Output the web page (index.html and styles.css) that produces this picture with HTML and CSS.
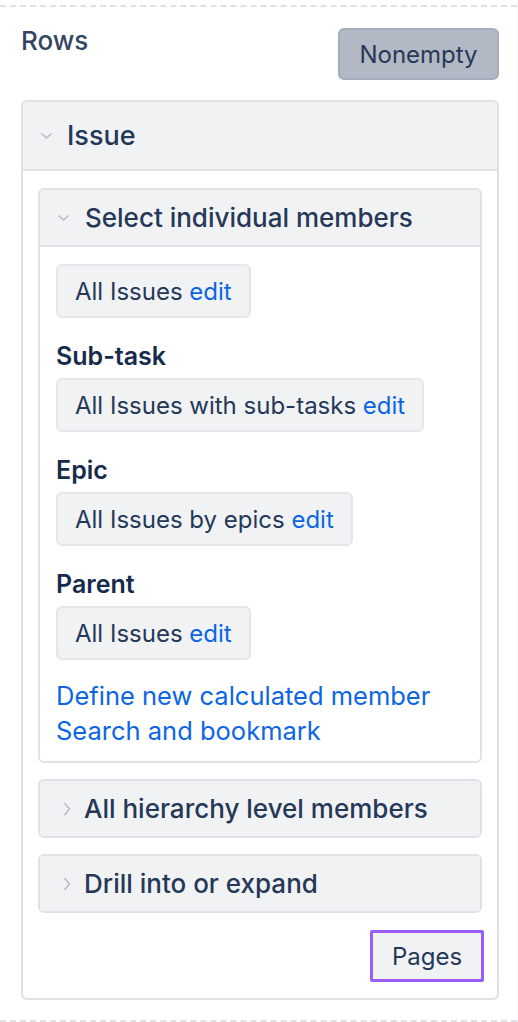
FILE: index.html
```html
<!DOCTYPE html>
<html>
<head>
<meta charset="utf-8">
<link rel="stylesheet" href="styles.css">
</head>
<body>
<div class="page">
  <div class="section">
    <div class="section-head">
      <h2 class="section-title">Rows</h2>
      <button class="btn-nonempty">Nonempty</button>
    </div>

    <div class="panel">
      <div class="panel-head">
        <svg class="chev" viewBox="0 0 12 8"><path d="M1 1.5 L6 6 L11 1.5" /></svg>
        <span class="panel-title">Issue</span>
      </div>
      <div class="panel-body">
        <div class="box">
          <div class="box-head">
            <svg class="chev" viewBox="0 0 12 8"><path d="M1 1.5 L6 6 L11 1.5" /></svg>
            <span class="box-title">Select individual members</span>
          </div>
          <div class="box-body">
            <div class="chip">All Issues <a class="link">edit</a></div>
            <div class="label">Sub-task</div>
            <div class="chip">All Issues with sub-tasks <a class="link">edit</a></div>
            <div class="label">Epic</div>
            <div class="chip">All Issues by epics <a class="link">edit</a></div>
            <div class="label">Parent</div>
            <div class="chip">All Issues <a class="link">edit</a></div>
            <div class="actions">
              <a class="link">Define new calculated member</a>
              <a class="link">Search and bookmark</a>
            </div>
          </div>
        </div>

        <div class="box collapsed">
          <div class="box-head">
            <svg class="chev-r" viewBox="0 0 8 14"><path d="M1.5 1 L6.5 7 L1.5 13" /></svg>
            <span class="box-title">All hierarchy level members</span>
          </div>
        </div>

        <div class="box collapsed">
          <div class="box-head">
            <svg class="chev-r" viewBox="0 0 8 14"><path d="M1.5 1 L6.5 7 L1.5 13" /></svg>
            <span class="box-title">Drill into or expand</span>
          </div>
        </div>

        <div class="footer">
          <button class="btn-pages">Pages</button>
        </div>
      </div>
    </div>
  </div>
</div>
</body>
</html>
```

FILE: styles.css
```css
* { box-sizing: border-box; }

html, body {
  margin: 0;
  padding: 0;
  background: #ffffff;
}

body {
  font-family: Inter, "Noto Sans", "Liberation Sans", sans-serif;
  color: #253858;
}

.page {
  padding-top: 5px;
  width: 518px;
  height: 1022px;
  border-right: 1px solid #f4f5f7;
}

.section {
  border-top: 2px dashed #dfe1e6;
  border-bottom: 2px dashed #dfe1e6;
  padding: 21px 18px 20px 21px;
}

.section-head {
  display: flex;
  justify-content: space-between;
  align-items: flex-start;
}

.section-title {
  margin: 0;
  font-size: 26px;
  font-weight: 500;
  line-height: 26px;
  color: #344563;
}

.btn-nonempty {
  font-family: inherit;
  font-size: 24px;
  color: #253858;
  background: #b3b9c4;
  border: 2px solid #a5adba;
  border-radius: 6px;
  height: 52px;
  width: 161px;
  padding: 0;
}

.panel {
  margin-top: 20px;
  border: 2px solid #dfe1e6;
  border-radius: 6px;
  overflow: hidden;
}

.panel-head {
  display: flex;
  align-items: center;
  height: 69px;
  background: #f1f2f4;
  border-bottom: 2px solid #dfe1e6;
  padding-left: 17px;
}

.chev {
  width: 13px;
  height: 8px;
  fill: none;
  stroke: #b3b9c4;
  stroke-width: 1.4;
  flex: none;
}

.chev-r {
  width: 8px;
  height: 14px;
  fill: none;
  stroke: #b3b9c4;
  stroke-width: 1.4;
  flex: none;
}

.panel-title {
  margin-left: 14px;
  font-size: 27px;
  font-weight: 500;
  color: #253858;
}

.panel-body {
  padding: 17px 15px 16px 15px;
}

.box {
  border: 2px solid #dfe1e6;
  border-radius: 6px;
  overflow: hidden;
}

.box + .box {
  margin-top: 16px;
}

.box-head {
  display: flex;
  align-items: center;
  height: 55px;
  background: #f1f2f4;
  padding-left: 17px;
}

.box-head .chev-r {
  margin-left: 6px;
  margin-right: 13px;
}

.box .box-head .chev + .box-title {
  margin-left: 15px;
}

.box-title {
  font-size: 26px;
  font-weight: 500;
  color: #253858;
}

.box-body {
  border-top: 2px solid #dfe1e6;
  padding: 17px 16px 13px 16px;
  display: flex;
  flex-direction: column;
  align-items: flex-start;
}

.chip {
  height: 54px;
  display: flex;
  align-items: center;
  padding: 0 17px 0 17px;
  background: #f1f2f4;
  border: 2px solid #e4e6ea;
  border-radius: 6px;
  font-size: 24px;
  color: #253858;
  white-space: pre;
}

.link {
  color: #0c66e4;
  text-decoration: none;
}

.label {
  margin-top: 22px;
  margin-bottom: 6px;
  font-size: 25px;
  line-height: 32px;
  font-weight: 600;
  color: #172b4d;
}

.actions {
  margin-top: 18px;
  display: flex;
  flex-direction: column;
  font-size: 25.5px;
  line-height: 35px;
}

.footer {
  display: flex;
  justify-content: flex-end;
  margin-top: 17px;
  margin-right: -2px;
}

.btn-pages {
  font-family: inherit;
  font-size: 24px;
  color: #253858;
  background: #f1f2f4;
  border: 3px solid #9b5cf7;
  border-radius: 2px;
  width: 114px;
  height: 52px;
  padding: 0;
}
```
